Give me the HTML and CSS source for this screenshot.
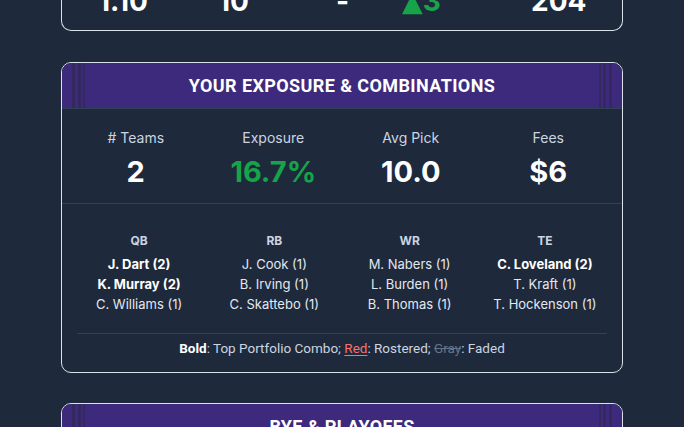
FILE: index.html
```html
<!DOCTYPE html>
<html>
<head>
<meta charset="utf-8">
<link rel="stylesheet" href="styles.css">
</head>
<body>
<div class="page">
  <section class="card top-card">
    <div class="top-row">
      <div class="top-val">1.10</div>
      <div class="top-val">10</div>
      <div class="top-val">-</div>
      <div class="top-val green"><span class="tri">▲</span>3</div>
      <div class="top-val">204</div>
    </div>
  </section>

  <section class="card">
    <header class="card-head"><h2>YOUR EXPOSURE &amp; COMBINATIONS</h2></header>
    <div class="stats">
      <div class="stat"><div class="stat-label"># Teams</div><div class="stat-value">2</div></div>
      <div class="stat"><div class="stat-label">Exposure</div><div class="stat-value green">16.7%</div></div>
      <div class="stat"><div class="stat-label">Avg Pick</div><div class="stat-value">10.0</div></div>
      <div class="stat"><div class="stat-label">Fees</div><div class="stat-value">$6</div></div>
    </div>
    <div class="combos">
      <div class="positions">
        <div class="pos">
          <div class="pos-head">QB</div>
          <div class="player top">J. Dart <span class="cnt">(2)</span></div>
          <div class="player top">K. Murray <span class="cnt">(2)</span></div>
          <div class="player">C. Williams <span class="cnt">(1)</span></div>
        </div>
        <div class="pos">
          <div class="pos-head">RB</div>
          <div class="player">J. Cook <span class="cnt">(1)</span></div>
          <div class="player">B. Irving <span class="cnt">(1)</span></div>
          <div class="player">C. Skattebo <span class="cnt">(1)</span></div>
        </div>
        <div class="pos">
          <div class="pos-head">WR</div>
          <div class="player">M. Nabers <span class="cnt">(1)</span></div>
          <div class="player">L. Burden <span class="cnt">(1)</span></div>
          <div class="player">B. Thomas <span class="cnt">(1)</span></div>
        </div>
        <div class="pos">
          <div class="pos-head">TE</div>
          <div class="player top">C. Loveland <span class="cnt">(2)</span></div>
          <div class="player">T. Kraft <span class="cnt">(1)</span></div>
          <div class="player">T. Hockenson <span class="cnt">(1)</span></div>
        </div>
      </div>
      <div class="legend"><b>Bold</b>: Top Portfolio Combo; <span class="red">Red</span>: Rostered; <span class="gray">Gray</span>: Faded</div>
    </div>
  </section>

  <section class="card last-card">
    <header class="card-head"><h2>BYE &amp; PLAYOFFS</h2></header>
  </section>
</div>
</body>
</html>
```

FILE: styles.css
```css
html, body {
  margin: 0;
  padding: 0;
  background: #1e293b;
  height: 100%;
  overflow: hidden;
}
body {
  font-family: "Inter", "Roboto", sans-serif;
  color: #f1f5f9;
}
.page {
  padding: 0 61px;
  display: flex;
  flex-direction: column;
  gap: 31px;
}
.card {
  border: 1px solid #dbe2ea;
  border-radius: 10px;
  background: #1e293b;
  overflow: hidden;
  flex-shrink: 0;
}
.top-card {
  margin-top: -16px;
  border-top: none;
  border-top-left-radius: 0;
  border-top-right-radius: 0;
  padding-bottom: 11px;
}
.last-card {
  margin-top: -1px;
}
.top-row {
  display: grid;
  grid-template-columns: 120px 118px 66px 129px 1fr;
  padding-left: 36px;
}
.top-val {
  font-size: 28px;
  line-height: 34px;
  font-weight: 700;
  color: #ffffff;
}
.tri {
  font-family: "DejaVu Sans", sans-serif;
  font-size: 27px;
}
.green { color: #16a34a !important; }

.card-head {
  position: relative;
  background: #3d2a7c;
  border-bottom: 1px solid #334155;
  height: 45px;
  display: flex;
  align-items: center;
  justify-content: center;
}
.card-head::before,
.card-head::after {
  content: "";
  position: absolute;
  top: 0;
  bottom: 0;
  width: 14px;
}
.card-head::before {
  left: 10px;
  background: linear-gradient(to right,
    #33295f 0 3px, transparent 3px 6px,
    #33295f 6px 9px, transparent 9px 11px,
    #33295f 11px 13px, transparent 13px);
}
.card-head::after {
  right: 10px;
  background: linear-gradient(to left,
    #33295f 0 3px, transparent 3px 6px,
    #33295f 6px 9px, transparent 9px 11px,
    #33295f 11px 13px, transparent 13px);
}
.card-head h2 {
  margin: 0;
  font-family: "Roboto", sans-serif;
  font-weight: 700;
  font-size: 18px;
  line-height: 22px;
  letter-spacing: 0.4px;
  color: #ffffff;
}

.stats {
  display: grid;
  grid-template-columns: repeat(4, 1fr);
  padding: 19px 5px 13px;
  border-bottom: 1px solid #334155;
}
.stat {
  display: flex;
  flex-direction: column;
  align-items: center;
  gap: 6px;
}
.stat-label {
  font-size: 14px;
  line-height: 20px;
  color: #cbd5e1;
}
.stat-value {
  font-size: 29px;
  line-height: 36px;
  font-weight: 700;
  color: #ffffff;
}

.combos {
  padding: 29px 15px 15px;
}
.positions {
  display: grid;
  grid-template-columns: repeat(4, 1fr);
  column-gap: 11px;
  padding-bottom: 19px;
  border-bottom: 1px solid #334155;
}
.pos {
  display: flex;
  flex-direction: column;
  align-items: center;
}
.pos-head {
  font-size: 12px;
  line-height: 16px;
  font-weight: 700;
  color: #cbd5e1;
  margin-bottom: 5px;
}
.player {
  font-size: 13px;
  line-height: 20px;
  color: #e2e8f0;
  white-space: nowrap;
}
.player.top {
  font-weight: 700;
  color: #ffffff;
}
.legend {
  padding-top: 5px;
  text-align: center;
  font-family: "Roboto", sans-serif;
  font-size: 13.5px;
  line-height: 18px;
  color: #cbd5e1;
}
.legend b {
  color: #ffffff;
  font-weight: 700;
}
.legend .red {
  color: #f87171;
  text-decoration: underline;
  text-underline-offset: 2px;
}
.legend .gray {
  color: #64748b;
  text-decoration: line-through;
}
```
